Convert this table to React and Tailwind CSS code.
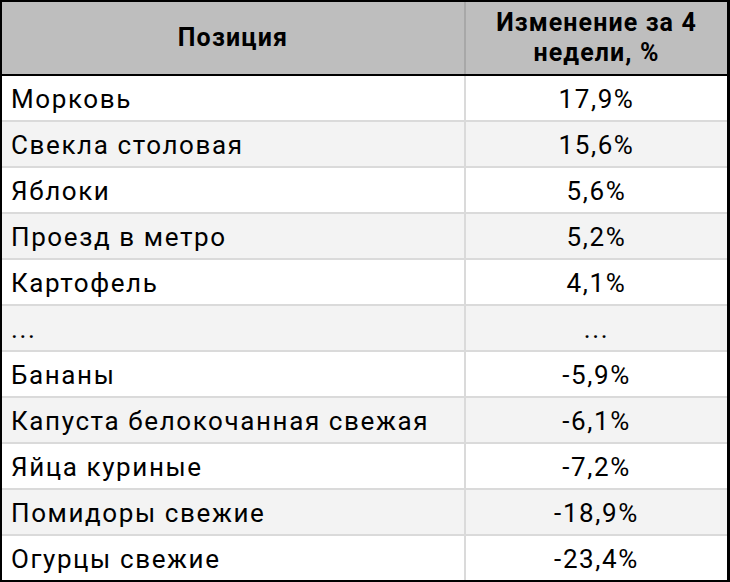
import React from "react";

const rows = [
  ["Морковь", "17,9%"],
  ["Свекла столовая", "15,6%"],
  ["Яблоки", "5,6%"],
  ["Проезд в метро", "5,2%"],
  ["Картофель", "4,1%"],
  ["...", "..."],
  ["Бананы", "-5,9%"],
  ["Капуста белокочанная свежая", "-6,1%"],
  ["Яйца куриные", "-7,2%"],
  ["Помидоры свежие", "-18,9%"],
  ["Огурцы свежие", "-23,4%"],
];

export default function App() {
  return (
    <div
      className="w-[730px] h-[582px] bg-white text-black"
      style={{ fontFamily: "Roboto, 'Noto Sans', sans-serif" }}
    >
      <div className="w-full h-full border-black border-l-2 border-t-2 border-r-[3px] border-b-2 flex flex-col">
        {/* Header */}
        <div className="flex h-[74px] bg-[#bebebe] border-b-2 border-black shrink-0">
          <div className="w-[464px] flex items-center justify-center border-r-2 border-[#a8a8a8] text-[25px] font-bold tracking-[1.2px]">
            Позиция
          </div>
          <div className="flex-1 flex items-center justify-center text-center text-[25px] font-bold leading-[30px] tracking-[1.1px]">
            Изменение за 4
            <br />
            недели, %
          </div>
        </div>

        {/* Rows */}
        {rows.map(([name, value], i) => (
          <div
            key={i}
            className={`flex flex-1 ${i % 2 === 1 ? "bg-[#f3f3f3]" : "bg-white"} ${
              i < rows.length - 1 ? "border-b-2 border-[#dadada]" : ""
            }`}
          >
            <div className="w-[464px] flex items-center pl-[9px] pt-[2px] border-r-2 border-[#dadada] text-[26px] tracking-[1.6px]">
              {name}
            </div>
            <div className="flex-1 flex items-center justify-center pt-[2px] text-[26px] tracking-[1.6px]">
              {value}
            </div>
          </div>
        ))}
      </div>
    </div>
  );
}
